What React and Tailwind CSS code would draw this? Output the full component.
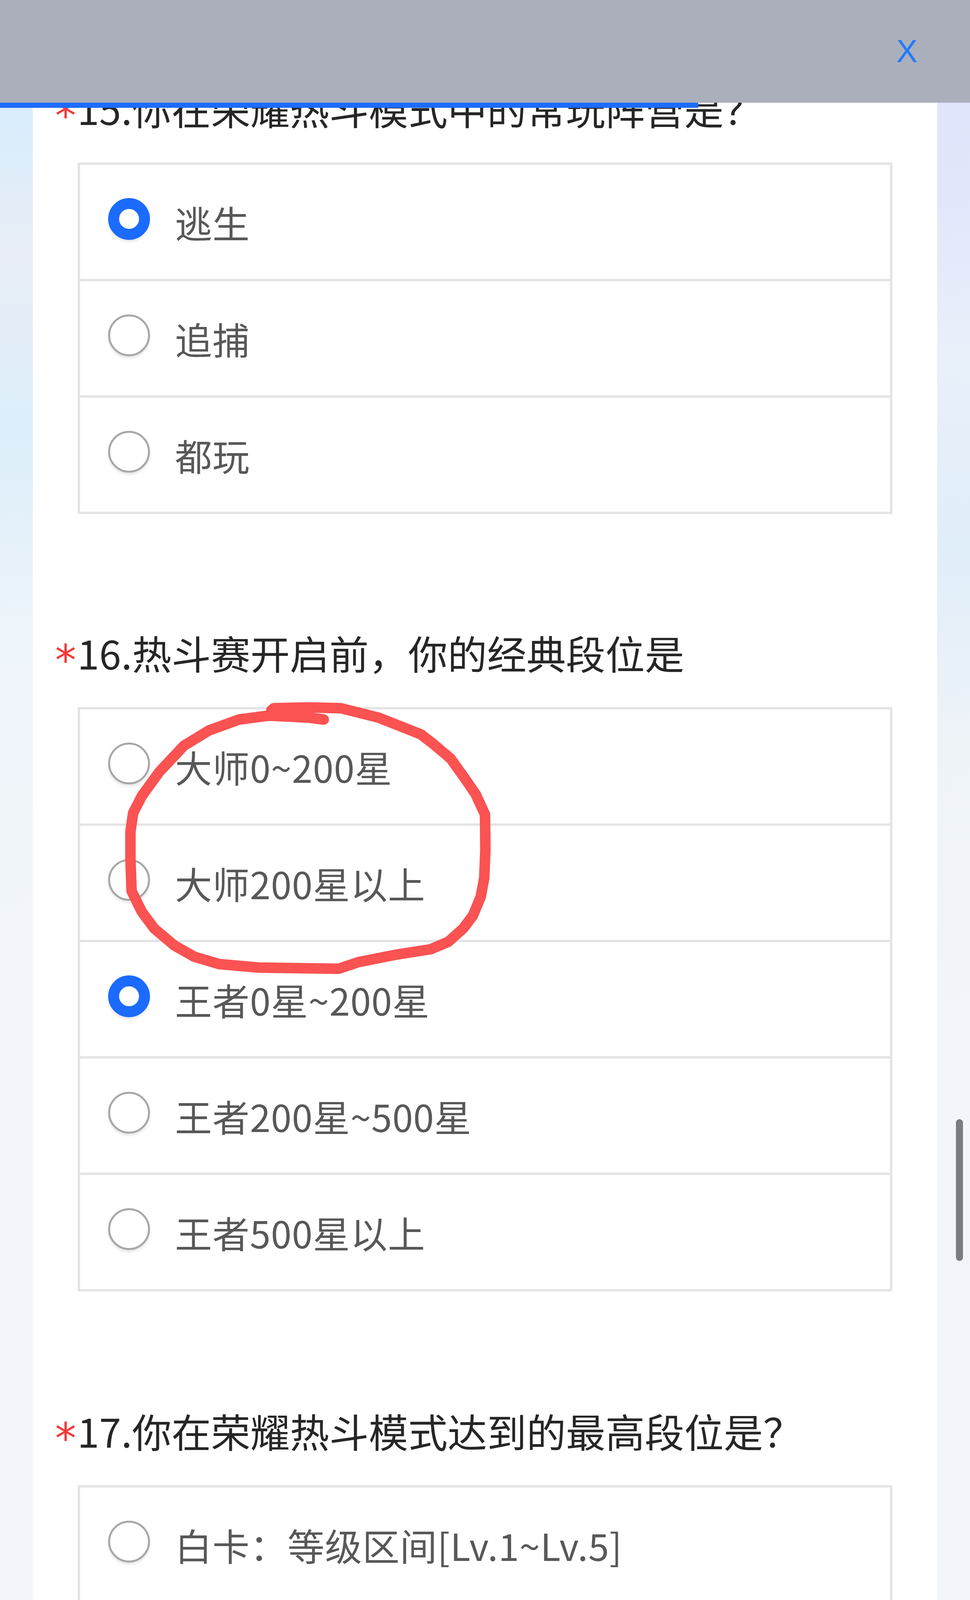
import React from "react";

const FONT = { fontFamily: '"Noto Sans CJK SC", "Noto Sans", sans-serif' };

function Radio({ checked }) {
  if (checked) {
    return (
      <span className="block w-[107px] h-[107px] shrink-0 mb-[16px] rounded-full border-[28px] border-[#1b6bff] bg-white shadow-[0_5px_6px_rgba(0,0,0,0.10)]" />
    );
  }
  return (
    <span className="block w-[107px] h-[107px] shrink-0 mb-[16px] rounded-full border-[5px] border-[#a7a7a7] bg-white shadow-[0_5px_6px_rgba(0,0,0,0.10)]" />
  );
}

function Question({ num, title, options, checkedIndex, className }) {
  return (
    <div className={className}>
      <div className="flex items-start h-[140px] pl-[57px]">
        <span
          className="block leading-[70px] text-[108px] text-[#f43a3a] mt-[56px] w-[57px] shrink-0"
          style={{ fontFamily: '"DejaVu Sans", sans-serif' }}
        >
          *
        </span>
        <span className="block text-[101px] leading-[140px] text-[#262626] whitespace-nowrap" style={FONT}>
          {num}.{title}
        </span>
      </div>
      <div className="mt-[70px] mx-[115px] border-[6px] border-[#e4e4e4] divide-y-[6px] divide-[#e4e4e4]">
        {options.map((o, i) => (
          <div key={i} className="box-content h-[292px] flex items-center pl-[72px] gap-[64px] bg-white">
            <Radio checked={i === checkedIndex} />
            <span className="text-[95px] tracking-[1px] leading-none text-[#585858] whitespace-nowrap" style={FONT}>
              {o}
            </span>
          </div>
        ))}
      </div>
    </div>
  );
}

const loopPts = [
  [829, 1842], [790, 1837], [688, 1832], [612, 1842], [535, 1870], [471, 1909],
  [408, 1976], [363, 2038], [341, 2081], [334, 2129], [334, 2200], [337, 2281],
  [363, 2334], [395, 2377], [446, 2420], [497, 2449], [561, 2468], [663, 2477],
  [867, 2480], [918, 2463], [1014, 2444], [1103, 2430], [1148, 2411], [1186, 2377],
  [1211, 2344], [1231, 2296], [1240, 2248], [1243, 2176], [1242, 2085], [1218, 2033],
  [1192, 1995], [1154, 1942], [1109, 1904], [1078, 1880], [969, 1837], [873, 1813],
  [790, 1811], [701, 1813], [695, 1818],
];
const loopD = loopPts.map((p, i) => (i === 0 ? "M" : "L") + p[0] + " " + p[1]).join(" ");

export default function App() {
  return (
    <div className="relative w-[2484px] h-[4416px] overflow-hidden bg-white">
      <div className="flex w-full h-full">
        <div className="w-[84px] shrink-0 h-full bg-[linear-gradient(180deg,#d6eaf9_0px,#d8ecfb_300px,#e9eef7_650px,#dceefa_1100px,#edf4fa_1600px,#f2f6fa_2400px,#f2f6fa_4416px)]" />
        <div className="w-[2316px] shrink-0 h-full overflow-hidden bg-white pt-[206px]">
          <Question
            num="15"
            title="你在荣耀热斗模式中的常玩阵营是？"
            options={["逃生", "追捕", "都玩"]}
            checkedIndex={0}
          />
          <Question
            className="mt-[284px]"
            num="16"
            title="热斗赛开启前，你的经典段位是"
            options={["大师0~200星", "大师200星以上", "王者0星~200星", "王者200星~500星", "王者500星以上"]}
            checkedIndex={2}
          />
          <Question
            className="mt-[286px]"
            num="17"
            title="你在荣耀热斗模式达到的最高段位是？"
            options={["白卡：等级区间[Lv.1~Lv.5]", "蓝卡：等级区间[Lv.6~Lv.15]"]}
            checkedIndex={-1}
          />
        </div>
        <div className="w-[84px] shrink-0 h-full bg-[linear-gradient(180deg,#e0e4fb_0px,#e2e6fb_500px,#e9f0fa_900px,#e0eefa_1400px,#eef3f8_1900px,#f2f5f9_2600px,#f2f5f9_4416px)]" />
      </div>

      {/* header overlay */}
      <div className="absolute left-0 top-0 w-full h-[263px] bg-[#abafbb] flex items-start justify-end pr-[134px] pt-[90px]">
        <span className="text-[82px] leading-none text-[#1e7bff]" style={{ fontFamily: '"Liberation Sans", Arial, sans-serif' }}>
          X
        </span>
      </div>
      {/* progress bar */}
      <div className="absolute left-0 top-[263px] w-[1788px] h-[13px] bg-[#1c6cff]" />

      {/* scrollbar */}
      <div className="absolute left-[2448px] top-[2865px] w-[18px] h-[363px] rounded-full bg-[#7b7c7f]" />

      {/* red hand-drawn annotation */}
      <svg className="absolute left-0 top-0 pointer-events-none" width="2484" height="4416" viewBox="0 0 2484 4416">
        <path d={loopD} fill="none" stroke="#fb5252" strokeWidth="27" strokeLinecap="round" strokeLinejoin="round" />
      </svg>
    </div>
  );
}
